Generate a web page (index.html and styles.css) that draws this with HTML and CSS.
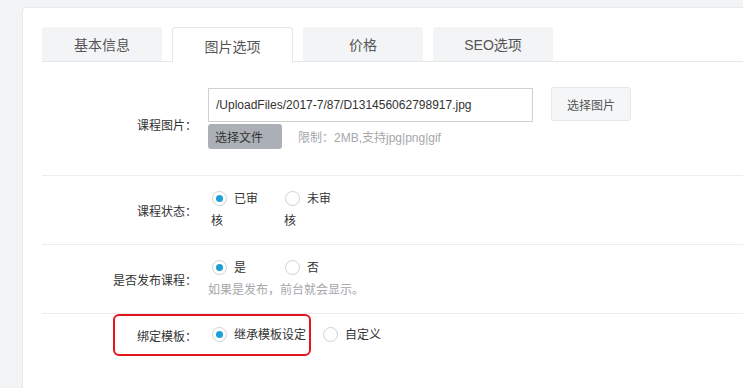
FILE: index.html
```html
<!DOCTYPE html>
<html lang="zh-CN">
<head>
<meta charset="utf-8">
<link rel="stylesheet" href="styles.css">
</head>
<body>
<div class="card">
  <div class="tabs">
    <div class="tab">基本信息</div>
    <div class="tab active">图片选项</div>
    <div class="tab">价格</div>
    <div class="tab">SEO选项</div>
  </div>
  <div class="form">
    <div class="row row-pic">
      <div class="label label-pic">课程图片：</div>
      <div class="field">
        <div class="line">
          <div class="input">/UploadFiles/2017-7/87/D131456062798917.jpg</div>
          <div class="btn">选择图片</div>
        </div>
        <div class="line line2">
          <div class="file-btn">选择文件</div>
          <div class="hint">限制：2MB,支持jpg|png|gif</div>
        </div>
      </div>
    </div>
    <div class="row row-radio">
      <div class="label">课程状态：</div>
      <div class="field">
        <div class="options">
          <div class="opt narrow"><span class="radio checked"></span>已审核</div>
          <div class="opt narrow"><span class="radio"></span>未审核</div>
        </div>
      </div>
    </div>
    <div class="row row-radio">
      <div class="label">是否发布课程：</div>
      <div class="field">
        <div class="options">
          <div class="opt narrow"><span class="radio checked"></span>是</div>
          <div class="opt narrow"><span class="radio"></span>否</div>
        </div>
        <div class="help">如果是发布，前台就会显示。</div>
      </div>
    </div>
    <div class="row row-last">
      <div class="label">绑定模板：</div>
      <div class="field">
        <div class="options">
          <div class="opt wide"><span class="radio checked"></span>继承模板设定</div>
          <div class="opt wide"><span class="radio"></span>自定义</div>
        </div>
      </div>
      <div class="highlight"></div>
    </div>
  </div>
</div>
</body>
</html>
```
FILE: styles.css
```css
html, body {
  margin: 0;
  padding: 0;
  height: 100%;
  overflow: hidden;
}
body {
  background: #f2f3f5;
  font-family: "Liberation Sans", "Noto Sans CJK SC", sans-serif;
  font-size: 12px;
  color: #333;
  padding: 7px 0 0 22px;
  box-sizing: border-box;
}
.card {
  background: #fff;
  border: 1px solid #e8e9eb;
  border-radius: 4px;
  width: 760px;
  height: 420px;
  padding: 19px 0 0 19px;
  box-sizing: border-box;
}
.tabs {
  display: flex;
  gap: 10px;
  height: 34px;
  border-bottom: 1px solid #e6e7e9;
  box-sizing: content-box;
}
.tab {
  width: 120px;
  height: 34px;
  box-sizing: border-box;
  background: #f3f4f6;
  border-radius: 3px 3px 0 0;
  display: flex;
  align-items: center;
  justify-content: center;
  font-size: 14px;
  color: #555;
}
.tab.active {
  width: 121px;
  background: #fff;
  border: 1px solid #e6e7e9;
  border-bottom: none;
  height: 35px;
  margin-bottom: -1px;
  padding-top: 1px;
}
.row {
  display: flex;
  align-items: center;
  border-bottom: 1px solid #ebecee;
  position: relative;
}
.label {
  width: 155px;
  text-align: right;
  flex: none;
  color: #333;
  margin-right: 11px;
}
.label-pic {
  margin-top: 12px;
}
.row-pic {
  padding: 26px 0 26px;
}
.line {
  display: flex;
  align-items: center;
}
.input {
  width: 325px;
  height: 34px;
  box-sizing: border-box;
  border: 1px solid #cfd1d3;
  padding: 0 7px;
  line-height: 32px;
  font-size: 12px;
  color: #333;
  white-space: nowrap;
  overflow: hidden;
}
.btn {
  margin-left: 18px;
  width: 80px;
  height: 34px;
  box-sizing: border-box;
  background: #f4f6f8;
  border: 1px solid #e6e8eb;
  border-radius: 3px;
  display: flex;
  align-items: center;
  justify-content: center;
  color: #555;
  margin-top: -2px;
}
.line2 {
  margin-top: 2px;
}
.file-btn {
  width: 74px;
  height: 25px;
  background: #aab0b6;
  border-radius: 3px;
  display: flex;
  align-items: center;
  padding-left: 7px;
  box-sizing: border-box;
  color: #333;
}
.hint {
  margin-left: 16px;
  color: #a5a7aa;
  font-size: 12px;
}
.row-radio {
  padding: 12px 0;
}
.options {
  display: flex;
  align-items: flex-start;
  padding-left: 3px;
}
.opt {
  line-height: 22px;
  color: #333;
}
.opt.narrow {
  width: 56px;
  margin-right: 17px;
}
.opt.wide {
  margin-right: 16px;
  white-space: nowrap;
}
.radio {
  display: inline-block;
  width: 15px;
  height: 15px;
  box-sizing: border-box;
  border: 1px solid #cfd1d4;
  border-radius: 50%;
  vertical-align: -3px;
  margin-right: 7px;
  margin-left: 1px;
  position: relative;
  background: #fff;
}
.radio.checked::after {
  content: "";
  position: absolute;
  left: 3px;
  top: 3px;
  width: 7px;
  height: 7px;
  border-radius: 50%;
  background: #1a9fd6;
}
.help {
  color: #a5a7aa;
  line-height: 22px;
}
.row-last {
  border-bottom: none;
  height: 42px;
  align-items: center;
}
.highlight {
  position: absolute;
  left: 71px;
  top: 0;
  width: 198px;
  height: 42px;
  box-sizing: border-box;
  border: 2px solid #e5141c;
  border-radius: 6px;
}
```
